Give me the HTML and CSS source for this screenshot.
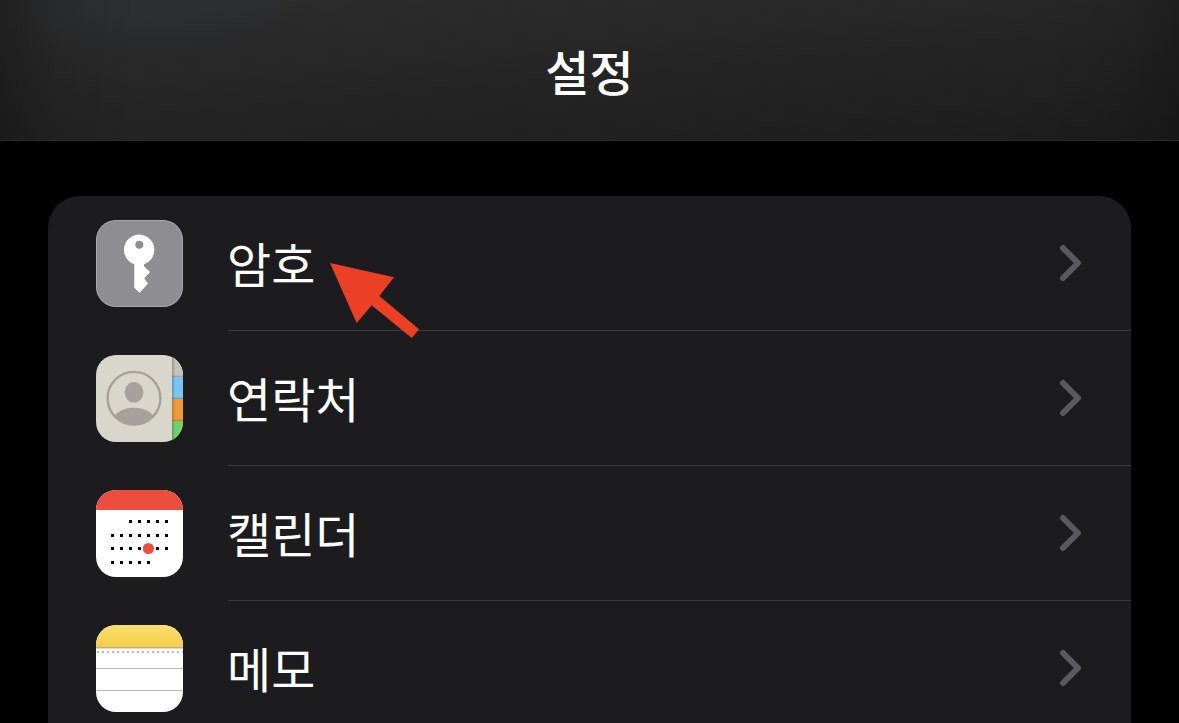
FILE: index.html
```html
<!DOCTYPE html>
<html lang="ko">
<head>
<meta charset="utf-8">
<meta name="viewport" content="width=device-width, initial-scale=1">
<title>설정</title>
<link rel="stylesheet" href="styles.css">
</head>
<body>
<div class="screen">
  <header class="navbar">
    <h1 class="navbar-title">설정</h1>
  </header>
  <main class="content">
    <ul class="group">
      <li class="item">
        <a class="row" href="#passwords">
          <svg class="app-icon" viewBox="0 0 87 87" aria-hidden="true">
            <rect width="87" height="87" fill="#8e8d92"/>
            <path fill="#fff" fill-rule="evenodd" d="M38.3 44.2A15.2 15.2 0 1 1 48 44.2V46.3L54 52L48.3 58.3L52 63.5L43.7 72.7L38.3 67.7ZM47.3 24.8a4 4 0 1 0-8 0a4 4 0 1 0 8 0Z"/>
            <rect x=".5" y=".5" width="86" height="86" rx="19.5" fill="none" stroke="#a9a8ac"/>
          </svg>
          <span class="label">암호</span>
          <svg class="chevron" viewBox="0 0 24 40" aria-hidden="true"><path d="M4 4L19 19L4 34"/></svg>
        </a>
        <svg class="pointer" viewBox="0 0 90 76" aria-hidden="true"><path fill="#eb4026" d="M0 0L64 14.3L49.3 33L89 66.3L81.7 75L41.7 42.3L26.7 60Z"/></svg>
      </li>
      <li class="item">
        <a class="row" href="#contacts">
          <svg class="app-icon" viewBox="0 0 87 87" aria-hidden="true">
            <defs>
              <clipPath id="portrait"><circle cx="38" cy="43.3" r="27"/></clipPath>
              <linearGradient id="tab-shade" x2="0" y2="1"><stop stop-color="#000" stop-opacity="0"/><stop offset="1" stop-color="#000" stop-opacity=".22"/></linearGradient>
              <linearGradient id="spine-shade"><stop stop-color="#000" stop-opacity=".24"/><stop offset="1" stop-color="#000" stop-opacity="0"/></linearGradient>
            </defs>
            <rect width="87" height="87" fill="#d9d6cc"/>
            <rect x="76" width="11" height="22" fill="#c5c2b9"/>
            <rect x="76" y="22" width="11" height="22" fill="#78c5f4"/>
            <rect x="76" y="44" width="11" height="22" fill="#f09b3b"/>
            <rect x="76" y="66" width="11" height="21" fill="#73d06f"/>
            <path fill="url(#tab-shade)" d="M76 20h11v2H76z"/>
            <path fill="url(#tab-shade)" d="M76 42h11v2H76z"/>
            <path fill="url(#tab-shade)" d="M76 64h11v2H76z"/>
            <rect x="76" width="3" height="87" fill="url(#spine-shade)"/>
            <circle cx="38" cy="43.3" r="26.4" fill="none" stroke="#a6a29b" stroke-width="2.4"/>
            <ellipse cx="38" cy="37.3" rx="9.4" ry="10.4" fill="#a6a29b"/>
            <ellipse cx="38" cy="68" rx="22" ry="15.3" fill="#a6a29b" clip-path="url(#portrait)"/>
          </svg>
          <span class="label">연락처</span>
          <svg class="chevron" viewBox="0 0 24 40" aria-hidden="true"><path d="M4 4L19 19L4 34"/></svg>
        </a>
      </li>
      <li class="item">
        <a class="row" href="#calendar">
          <svg class="app-icon" viewBox="0 0 87 87" aria-hidden="true">
            <rect width="87" height="87" fill="#fff"/>
            <rect width="87" height="20" fill="#eb4e3d"/>
            <g fill="none" stroke="#000" stroke-width="3">
              <path stroke-dasharray="3 6" d="M33 31.5H72"/>
              <path stroke-dasharray="3 6" d="M15 45.5H72"/>
              <path stroke-dasharray="3 6" d="M15 58.5H72"/>
              <path stroke-dasharray="3 6" d="M15 72.5H54"/>
            </g>
            <circle cx="52.4" cy="58.5" r="5.6" fill="#eb4e3d"/>
          </svg>
          <span class="label">캘린더</span>
          <svg class="chevron" viewBox="0 0 24 40" aria-hidden="true"><path d="M4 4L19 19L4 34"/></svg>
        </a>
      </li>
      <li class="item">
        <a class="row" href="#notes">
          <svg class="app-icon" viewBox="0 0 87 87" aria-hidden="true">
            <defs>
              <linearGradient id="pad" x2="0" y2="1"><stop stop-color="#fbdf72"/><stop offset="1" stop-color="#f6cd46"/></linearGradient>
            </defs>
            <rect width="87" height="87" fill="#fff"/>
            <rect width="87" height="22" fill="url(#pad)"/>
            <path fill="#b9ae90" d="M0 22h87v1H0z"/>
            <path fill="#dedbd3" d="M0 23h87v1H0z"/>
            <path fill="none" stroke="#bdbdbf" stroke-width="2" stroke-dasharray="2 3" d="M1 27H87"/>
            <path fill="#b8b8ba" d="M0 43h87v1H0zM0 65h87v1H0z"/>
          </svg>
          <span class="label">메모</span>
          <svg class="chevron" viewBox="0 0 24 40" aria-hidden="true"><path d="M4 4L19 19L4 34"/></svg>
        </a>
      </li>
    </ul>
  </main>
</div>
</body>
</html>
```
FILE: styles.css
```css
* {
  box-sizing: border-box;
}

body {
  margin: 0;
  background: #000;
  color: #fff;
  font-family: "Noto Sans CJK KR", sans-serif;
}

.screen {
  display: flex;
  flex-direction: column;
  height: 100vh;
  overflow: hidden;
}

.navbar {
  flex: none;
  padding: 38px 48px;
  border-bottom: 1px solid #2b2b2b;
  background:
    radial-gradient(ellipse 160px 60px at 13% 0, rgba(44, 54, 64, 0.3), transparent),
    linear-gradient(90deg, rgba(0, 0, 0, 0.28), rgba(0, 0, 0, 0.08) 5%, transparent 12%, transparent 88%, rgba(0, 0, 0, 0.06) 95%, rgba(0, 0, 0, 0.2)),
    linear-gradient(175deg, #2c2c2c 10%, #1c1c1c);
}

.navbar-title {
  margin: 0;
  font-size: 48px;
  font-weight: 500;
  line-height: 64px;
  text-align: center;
}

.content {
  flex: 1;
  min-height: 0;
  padding: 55px 48px 0;
}

.group {
  margin: 0;
  padding: 0;
  list-style: none;
  border-radius: 32px 32px 0 0;
  background: #1c1c1e;
}

.item {
  position: relative;
}

.row {
  display: flex;
  align-items: center;
  padding-left: 48px;
  gap: 44px;
  color: inherit;
  text-decoration: none;
  background: linear-gradient(#3b3b3e, #3b3b3e) 180px 100% / 100% 1px no-repeat;
}

.item:last-child .row {
  background: none;
}

.app-icon {
  flex: none;
  width: 87px;
  height: 87px;
  margin: 24px 0;
  border-radius: 20px;
}

.label {
  flex: 1;
  padding-bottom: 4px;
  font-size: 48px;
  font-weight: 400;
  line-height: 64px;
}

.chevron {
  flex: none;
  width: 24px;
  height: 40px;
  margin-right: 48px;
  fill: none;
  stroke: #5a5a5e;
  stroke-width: 6;
  stroke-linecap: round;
  stroke-linejoin: round;
}

.pointer {
  position: absolute;
  left: 282px;
  top: 67px;
  z-index: 1;
  width: 90px;
  height: 76px;
}
```
